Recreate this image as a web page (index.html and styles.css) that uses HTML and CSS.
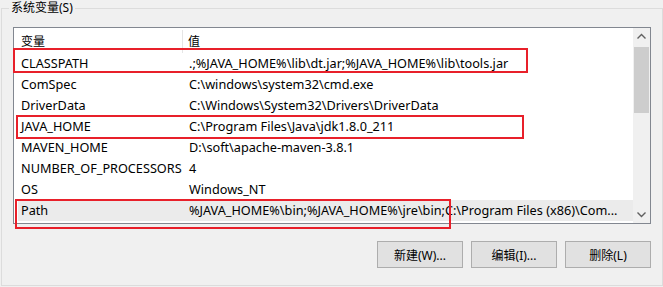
FILE: index.html
```html
<!DOCTYPE html>
<html lang="zh-CN">
<head>
    <meta charset="UTF-8">
    <title>系统变量</title>
    <link rel="stylesheet" href="styles.css">
</head>
<body>
    <fieldset class="group">
        <legend>系统变量(S)</legend>
        <div class="list">
            <div class="list-body">
                <div class="list-head">
                    <span class="col-name">变量</span>
                    <span class="col-value">值</span>
                </div>
                <div class="row"><span class="col-name">CLASSPATH</span><span class="col-value">.;%JAVA_HOME%\lib\dt.jar;%JAVA_HOME%\lib\tools.jar</span></div>
                <div class="row"><span class="col-name">ComSpec</span><span class="col-value">C:\windows\system32\cmd.exe</span></div>
                <div class="row"><span class="col-name">DriverData</span><span class="col-value">C:\Windows\System32\Drivers\DriverData</span></div>
                <div class="row"><span class="col-name">JAVA_HOME</span><span class="col-value">C:\Program Files\Java\jdk1.8.0_211</span></div>
                <div class="row"><span class="col-name">MAVEN_HOME</span><span class="col-value">D:\soft\apache-maven-3.8.1</span></div>
                <div class="row"><span class="col-name">NUMBER_OF_PROCESSORS</span><span class="col-value">4</span></div>
                <div class="row"><span class="col-name">OS</span><span class="col-value">Windows_NT</span></div>
                <div class="row hover"><span class="col-name">Path</span><span class="col-value">%JAVA_HOME%\bin;%JAVA_HOME%\jre\bin;C:\Program Files (x86)\Com...</span></div>

                <!-- red annotation boxes -->
                <span class="mark mark-classpath"></span>
                <span class="mark mark-java"></span>
                <span class="mark mark-path"></span>
            </div>
            <div class="scrollbar">
                <svg class="arrow" width="17" height="17" viewBox="0 0 17 17"><path d="M4.5 10.5 L8.5 6.5 L12.5 10.5" fill="none" stroke="#606060" stroke-width="1.4"/></svg>
                <div class="track"><div class="thumb"></div></div>
                <svg class="arrow" width="17" height="17" viewBox="0 0 17 17"><path d="M4.5 6.5 L8.5 10.5 L12.5 6.5" fill="none" stroke="#606060" stroke-width="1.4"/></svg>
            </div>
        </div>
        <div class="buttons">
            <button>新建(W)...</button>
            <button>编辑(I)...</button>
            <button>删除(L)</button>
        </div>
    </fieldset>
</body>
</html>
```

FILE: styles.css
```css
body {
    margin: 0;
    background: #f0f0f0;
    font-family: "Noto Sans", "Noto Sans CJK SC", sans-serif;
    font-size: 12px;
    color: #000;
}
.group {
    margin: 0 0 1px 1px;
    padding: 11px 11px 0 11px;
    border: 1px solid #dcdcdc;
    box-sizing: border-box;
    height: 286px;
}
.group legend {
    margin-left: -4px;
    padding: 0 2px;
    line-height: 16px;
}
.list {
    display: flex;
    width: 638px;
    height: 197px;
    border: 1px solid #828790;
    box-sizing: border-box;
    background: #fff;
}
.list-body {
    position: relative;
    flex: 1;
}
.list-head {
    display: flex;
    height: 25px;
    align-items: center;
}
.list-head .col-name {
    border-right: 1px solid #e5e5e5;
    height: 23px;
    line-height: 23px;
    margin-top: 1px;
}
.row {
    display: flex;
    height: 21px;
    line-height: 21px;
    margin-left: 4px;
    font-size: 12.7px;
}
.row.hover {
    background: #ebebeb;
}
.col-name {
    width: 165px;
    padding-left: 3px;
    box-sizing: border-box;
    flex: none;
}
.list-head .col-name {
    width: 169px;
    padding-left: 7px;
}
.col-value {
    padding-left: 6px;
    white-space: nowrap;
}
.list-head .col-value {
    padding-left: 5px;
}
.scrollbar {
    width: 17px;
    display: flex;
    flex-direction: column;
    background: #f0f0f0;
}
.arrow {
    display: block;
    flex: none;
}
.track {
    flex: 1;
    padding: 2px 1px 0 1px;
}
.thumb {
    height: 66px;
    background: #cdcdcd;
}
.mark {
    position: absolute;
    border: 2px solid #e8202a;
    box-sizing: border-box;
}
.mark-classpath {
    left: -1px;
    top: 20px;
    width: 515px;
    height: 25px;
}
.mark-java {
    left: 2px;
    top: 87px;
    width: 508px;
    height: 24px;
}
.mark-path {
    left: 1px;
    top: 171px;
    width: 436px;
    height: 30px;
}
.buttons {
    display: flex;
    justify-content: flex-end;
    gap: 8px;
    width: 638px;
    margin-top: 17px;
}
.buttons button {
    width: 86px;
    height: 27px;
    border: 1px solid #adadad;
    background: #e1e1e1;
    font-family: "Noto Sans", "Noto Sans CJK SC", sans-serif;
    font-size: 12px;
    color: #000;
    padding: 0;
}
```
